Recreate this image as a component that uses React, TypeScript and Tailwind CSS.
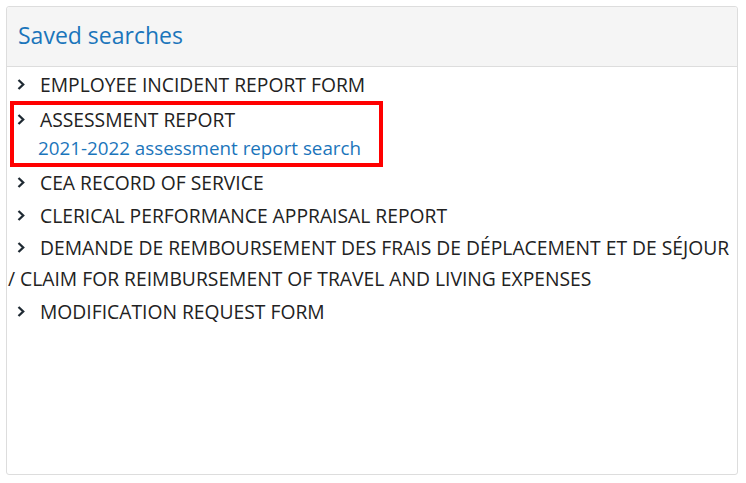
import { ReactNode } from "react";

function Chevron() {
    return (
        <span className="inline-block w-[8px] h-[11px] ml-[9px] mr-[15px] align-[2px]">
            <svg viewBox="0 0 8 11" width="8" height="11" className="block">
                <path d="M1.5 1 L6.2 5.5 L1.5 10" fill="none" stroke="#1f2a33" strokeWidth="2.3" />
            </svg>
        </span>
    );
}

function Item({ children }: { children: ReactNode }) {
    return (
        <div className="leading-[31px] mb-[1.5px]">
            <Chevron />
            {children}
        </div>
    );
}

const searches = [
    "EMPLOYEE INCIDENT REPORT FORM",
    "ASSESSMENT REPORT",
    "CEA RECORD OF SERVICE",
    "CLERICAL PERFORMANCE APPRAISAL REPORT",
    "DEMANDE DE REMBOURSEMENT DES FRAIS DE DÉPLACEMENT ET DE SÉJOUR / CLAIM FOR REIMBURSEMENT OF TRAVEL AND LIVING EXPENSES",
    "MODIFICATION REQUEST FORM",
];

export default function App() {
    return (
        <div className="w-[746px] h-[483px] bg-white pt-[6px] pl-[6px] pr-[8px] pb-[8px]" style={{ fontFamily: '"Open Sans", "Noto Sans", sans-serif' }}>
            <div className="h-full border border-[#dddddd] rounded-[3px] flex flex-col">
                <div className="h-[60px] bg-[#f5f5f5] border-b border-[#dddddd] pl-[11px] flex items-center rounded-t-[3px]">
                    <h2 className="text-[23px] text-[#1b75bb] leading-none pb-[2px]">Saved searches</h2>
                </div>
                <div className="pl-px pr-px pt-[2px] text-[19.3px] text-[#222222]">
                    <div className="leading-[31px] mb-px">
                        <Chevron />
                        {searches[0]}
                    </div>
                    <div className="ml-[2px] mr-[353px] border-4 border-[#ff0000]">
                        <div className="-ml-[6px] leading-[29px]">
                            <Chevron />
                            {searches[1]}
                        </div>
                        <div className="pl-[24px] leading-[29px] text-[18.8px] text-[#1b75bb]">2021-2022 assessment report search</div>
                    </div>
                    {searches.slice(2).map((s) => (
                        <Item key={s}>{s}</Item>
                    ))}
                </div>
            </div>
        </div>
    );
}
